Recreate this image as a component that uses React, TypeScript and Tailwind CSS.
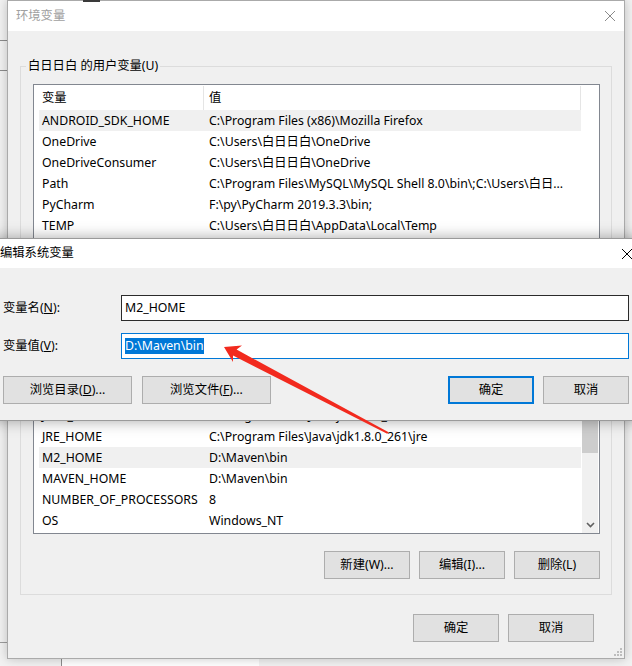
import type { ReactNode } from "react";

type Row = { name: string; value: string; selected?: boolean };

const userVars: Row[] = [
  { name: "ANDROID_SDK_HOME", value: "C:\\Program Files (x86)\\Mozilla Firefox", selected: true },
  { name: "OneDrive", value: "C:\\Users\\白日日白\\OneDrive" },
  { name: "OneDriveConsumer", value: "C:\\Users\\白日日白\\OneDrive" },
  { name: "Path", value: "C:\\Program Files\\MySQL\\MySQL Shell 8.0\\bin\\;C:\\Users\\白日..." },
  { name: "PyCharm", value: "F:\\py\\PyCharm 2019.3.3\\bin;" },
  { name: "TEMP", value: "C:\\Users\\白日日白\\AppData\\Local\\Temp" },
];

// system list is scrolled down; only the rows from JAVA_HOME on are in view
const systemVars: Row[] = [
  { name: "JAVA_HOME", value: "C:\\Program Files\\Java\\jdk1.8.0_261" },
  { name: "JRE_HOME", value: "C:\\Program Files\\Java\\jdk1.8.0_261\\jre" },
  { name: "M2_HOME", value: "D:\\Maven\\bin", selected: true },
  { name: "MAVEN_HOME", value: "D:\\Maven\\bin" },
  { name: "NUMBER_OF_PROCESSORS", value: "8" },
  { name: "OS", value: "Windows_NT" },
];

function CloseIcon({ className }: { className?: string }) {
  return (
    <svg viewBox="0 0 10 10" className={className} fill="none" stroke="currentColor" strokeWidth="1">
      <path d="M0 0L10 10M10 0L0 10" />
    </svg>
  );
}

function Btn({ children, focused, className = "" }: { children: ReactNode; focused?: boolean; className?: string }) {
  return (
    <button
      type="button"
      className={`flex h-[28px] shrink-0 items-center justify-center bg-[#e1e1e1] ${
        focused ? "border-2 border-[#0078d7]" : "border border-[#adadad]"
      } ${className}`}
    >
      {children}
    </button>
  );
}

function Scrollbar() {
  return (
    <div className="ml-[1px] mr-[1px] flex w-[16px] flex-col bg-[#f0f0f0]">
      <div className="h-[17px] shrink-0" />
      <div className="flex-1 bg-[#cdcdcd]" />
      <div className="h-[63px] shrink-0" />
      <div className="flex h-[17px] shrink-0 items-center justify-center">
        <svg viewBox="0 0 9 6" className="h-[6px] w-[9px]" fill="none" stroke="#606060" strokeWidth="1.6">
          <path d="M1 1L4.5 4.5L8 1" />
        </svg>
      </div>
    </div>
  );
}

// covered = the part sits under the edit dialog, so its labels are not drawn
function VarList({
  rows,
  scrolled,
  covered,
  className = "",
}: {
  rows: Row[];
  scrolled?: boolean;
  covered?: boolean;
  className?: string;
}) {
  return (
    <div className={`flex border border-[#828790] bg-white ${className}`}>
      <div className="flex w-[547px] flex-col pl-[5px]">
        <div className={`flex h-[25px] shrink-0 pt-[1px] ${covered ? "invisible" : ""}`}>
          <div className="flex w-[165px] items-center border-r border-[#e5e5e5] pl-[3px]">变量</div>
          <div className="flex w-[377px] items-center border-r border-[#e5e5e5] pl-[5px]">值</div>
        </div>
        <div className={`flex min-h-0 flex-1 flex-col overflow-hidden pb-[2px] ${scrolled ? "justify-end" : ""}`}>
          {rows.map((r) => (
            <div
              key={r.name}
              className={`flex h-[21px] shrink-0 items-center pt-[1px] ${r.selected ? "bg-[#f0f0f0]" : ""}`}
            >
              <div className="w-[165px] overflow-hidden whitespace-nowrap pl-[3px]">{r.name}</div>
              <div className="w-[377px] overflow-hidden whitespace-nowrap pl-[5px]">{r.value}</div>
            </div>
          ))}
        </div>
      </div>
      {scrolled && <Scrollbar />}
    </div>
  );
}

function GroupBox({
  label,
  children,
  covered,
  className = "",
}: {
  label: string;
  children: ReactNode;
  covered?: boolean;
  className?: string;
}) {
  return (
    <div className={`relative flex flex-col border border-[#dcdcdc] pb-[15px] pl-[12px] pr-[11px] pt-[17px] ${className}`}>
      <span
        className={`absolute -top-[9px] left-[5px] bg-[#f0f0f0] px-[2px] leading-[16px] ${covered ? "invisible" : ""}`}
      >
        {label}
      </span>
      {children}
    </div>
  );
}

function ListButtons({ covered }: { covered?: boolean }) {
  return (
    <div className={`mt-[17px] flex justify-end gap-[9px] ${covered ? "invisible" : ""}`}>
      <Btn className="w-[86px]">新建(W)...</Btn>
      <Btn className="w-[86px]">编辑(I)...</Btn>
      <Btn className="w-[86px]">删除(L)</Btn>
    </div>
  );
}

function EnvWindow() {
  return (
    <div className="absolute left-[7px] top-0 flex h-[659px] w-[618px] flex-col border border-[#aaaaaa] bg-[#f0f0f0] shadow-[0_0_10px_rgba(0,0,0,0.22)]">
      <div className="flex h-[30px] shrink-0 items-center justify-between bg-white pl-[8px] pr-[9px]">
        <span className="text-[#a0a0a0]">环境变量</span>
        <CloseIcon className="h-[10px] w-[10px] text-[#8a8a8a]" />
      </div>
      <div className="flex min-h-0 flex-1 flex-col px-[12px] pb-[16px]">
        <GroupBox label="白日日白 的用户变量(U)" className="mt-[35px]">
          <VarList rows={userVars} className="h-[176px]" />
          <ListButtons covered />
        </GroupBox>
        <GroupBox label="系统变量(S)" covered className="mt-[18px] min-h-0 flex-1">
          <VarList rows={systemVars} scrolled covered className="min-h-0 flex-1" />
          <ListButtons />
        </GroupBox>
        <div className="mt-[19px] flex justify-end gap-[9px] pr-[18px]">
          <Btn className="w-[86px]">确定</Btn>
          <Btn className="w-[86px]">取消</Btn>
        </div>
      </div>
      <svg viewBox="0 0 9 9" className="absolute bottom-[2px] right-[2px] h-[9px] w-[9px]" fill="#bdbdbd">
        <rect x="7" y="1" width="2" height="2" />
        <rect x="4" y="4" width="2" height="2" />
        <rect x="7" y="4" width="2" height="2" />
        <rect x="1" y="7" width="2" height="2" />
        <rect x="4" y="7" width="2" height="2" />
        <rect x="7" y="7" width="2" height="2" />
      </svg>
    </div>
  );
}

function EditDialog() {
  return (
    <div className="absolute -left-[9px] top-[238px] flex h-[183px] w-[650px] flex-col border border-[#9a9a9a] bg-[#f0f0f0] shadow-[0_0_14px_rgba(0,0,0,0.35)]">
      <div className="flex h-[29px] shrink-0 items-center justify-between bg-white pl-[8px] pr-[8px]">
        <span>编辑系统变量</span>
        <CloseIcon className="h-[10px] w-[10px] text-black" />
      </div>
      <div className="flex flex-col px-[11px] pt-[27px]">
        <div className="flex h-[26px] items-center">
          <span className="w-[118px] shrink-0">
            变量名(<u>N</u>):
          </span>
          <div className="flex h-full flex-1 items-center border border-[#2b2b2b] bg-white pl-[3px]">M2_HOME</div>
        </div>
        <div className="mt-[12px] flex h-[26px] items-center">
          <span className="w-[118px] shrink-0">
            变量值(<u>V</u>):
          </span>
          <div className="flex h-full flex-1 items-center border border-[#0078d7] bg-white pl-[3px]">
            <span className="bg-[#0078d7] leading-[16px] text-white">D:\Maven\bin</span>
          </div>
        </div>
        <div className="mt-[17px] flex items-center">
          <div className="flex gap-[10px]">
            <Btn className="w-[129px]">
              浏览目录(<u>D</u>)...
            </Btn>
            <Btn className="w-[129px]">
              浏览文件(<u>F</u>)...
            </Btn>
          </div>
          <div className="ml-auto flex gap-[9px]">
            <Btn focused className="w-[86px]">确定</Btn>
            <Btn className="w-[86px]">取消</Btn>
          </div>
        </div>
      </div>
    </div>
  );
}

function Arrow() {
  return (
    <svg className="pointer-events-none absolute left-0 top-0 h-[666px] w-[632px]" viewBox="0 0 632 666">
      <polygon
        fill="#f22a1e"
        points="224,347 242,345.5 236.6,349.6 388.6,432.2 387.2,433.8 233,355.6 233,362"
      />
    </svg>
  );
}

export default function App() {
  return (
    <div className="relative h-[666px] w-[632px] overflow-hidden bg-[#f2f2f2] font-['Noto_Sans','Noto_Sans_CJK_SC',sans-serif] text-[12.3px] text-black">
      {/* desktop behind the windows */}
      <div className="absolute left-0 top-[40px] h-px w-[7px] bg-[#8c8c8c]" />
      <div className="absolute left-0 top-[70px] h-px w-[7px] bg-[#8c8c8c]" />
      <div className="absolute left-0 top-[642px] h-px w-[7px] bg-[#9c9c9c]" />
      <div className="absolute left-[61px] top-[659px] h-[7px] w-px bg-[#8c8c8c]" />
      <div className="absolute left-[62px] top-[659px] h-[7px] w-[197px] bg-white" />
      <EnvWindow />
      <div className="absolute left-[83px] top-0 h-[2px] w-[17px] bg-[#3a3a3a]" />
      <EditDialog />
      <Arrow />
    </div>
  );
}
